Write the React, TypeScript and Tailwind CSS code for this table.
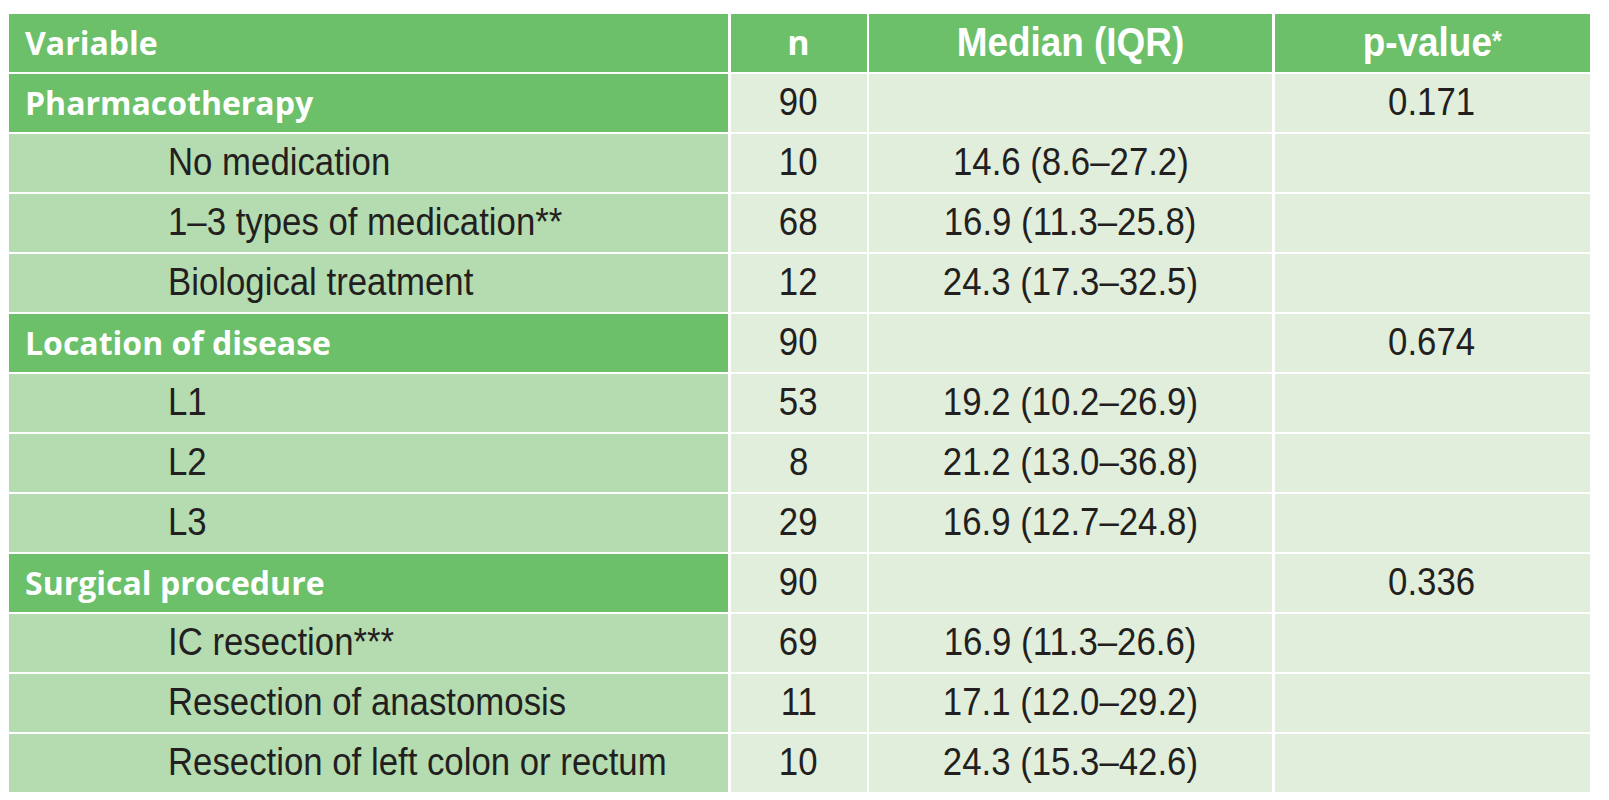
import React from "react";

type Row = {
  label: string;
  n: string;
  median?: string;
  p?: string;
  group?: boolean;
};

const rows: Row[] = [
  { label: "Pharmacotherapy", n: "90", p: "0.171", group: true },
  { label: "No medication", n: "10", median: "14.6 (8.6–27.2)" },
  { label: "1–3 types of medication**", n: "68", median: "16.9 (11.3–25.8)" },
  { label: "Biological treatment", n: "12", median: "24.3 (17.3–32.5)" },
  { label: "Location of disease", n: "90", p: "0.674", group: true },
  { label: "L1", n: "53", median: "19.2 (10.2–26.9)" },
  { label: "L2", n: "8", median: "21.2 (13.0–36.8)" },
  { label: "L3", n: "29", median: "16.9 (12.7–24.8)" },
  { label: "Surgical procedure", n: "90", p: "0.336", group: true },
  { label: "IC resection***", n: "69", median: "16.9 (11.3–26.6)" },
  { label: "Resection of anastomosis", n: "11", median: "17.1 (12.0–29.2)" },
  { label: "Resection of left colon or rectum", n: "10", median: "24.3 (15.3–42.6)" },
];

// condensed look: Liberation Sans squeezed horizontally
function Narrow({ children, left }: { children?: React.ReactNode; left?: boolean }) {
  return (
    <span
      className={`inline-block whitespace-nowrap font-['Liberation_Sans',Arial,sans-serif] text-[38px] scale-x-[0.915] ${
        left ? "origin-left" : "origin-center"
      }`}
    >
      {children}
    </span>
  );
}

function HeadText({ children }: { children: React.ReactNode }) {
  return (
    <span className="inline-block whitespace-nowrap font-['Liberation_Sans',Arial,sans-serif] text-[41px] font-bold text-white scale-x-[0.9] origin-center">
      {children}
    </span>
  );
}

const groupCell =
  "flex items-center bg-[#6cc06a] pl-[16px] font-['Open_Sans','Liberation_Sans',sans-serif] text-[32px] font-bold text-white whitespace-nowrap";

export default function App() {
  return (
    <div className="min-h-screen w-full bg-white pt-[14px] pl-[9px]">
      <div className="grid grid-cols-[719px_136px_403px_315px] auto-rows-[57.5px] gap-[2.5px] text-[#231f20]">
        {/* header */}
        <div className={groupCell}>Variable</div>
        <div className="flex items-center justify-center bg-[#6cc06a]">
          <span className="font-['Open_Sans','Liberation_Sans',sans-serif] text-[34px] font-bold text-white">n</span>
        </div>
        <div className="flex items-center justify-center bg-[#6cc06a]">
          <HeadText>Median (IQR)</HeadText>
        </div>
        <div className="flex items-center justify-center bg-[#6cc06a]">
          <HeadText>
            p-value<span className="relative -top-[6px] text-[28px]">*</span>
          </HeadText>
        </div>

        {rows.map((row) => (
          <React.Fragment key={row.label}>
            {row.group ? (
              <div className={groupCell}>{row.label}</div>
            ) : (
              <div className="flex items-center bg-[#b4dcb0] pl-[159px]">
                <Narrow left>{row.label}</Narrow>
              </div>
            )}
            <div className="flex items-center justify-center bg-[#e0eedb]">
              <Narrow>{row.n}</Narrow>
            </div>
            <div className="flex items-center justify-center bg-[#e0eedb]">
              <Narrow>{row.median}</Narrow>
            </div>
            <div className="flex items-center justify-center bg-[#e0eedb]">
              <Narrow>{row.p}</Narrow>
            </div>
          </React.Fragment>
        ))}
      </div>
    </div>
  );
}
